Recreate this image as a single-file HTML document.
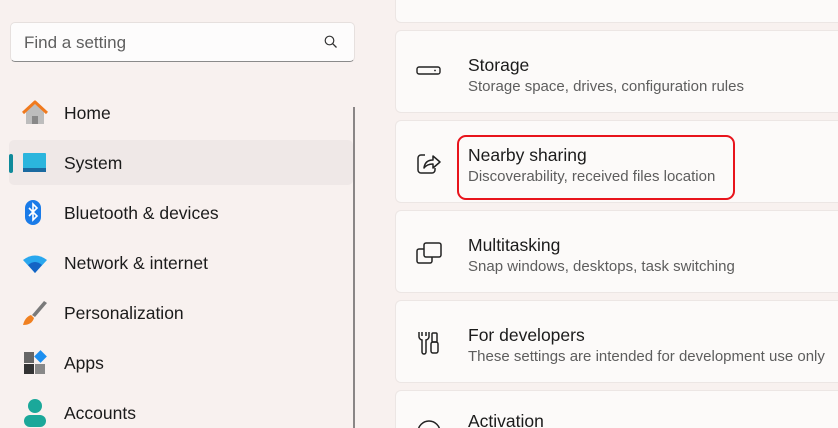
<!DOCTYPE html>
<html><head><meta charset="utf-8"><style>
*{margin:0;padding:0;box-sizing:border-box}
html,body{width:838px;height:428px;overflow:hidden}
body{background:#f8f1ef;font-family:"Liberation Sans",sans-serif;position:relative;color:#1b1b1b}
.search{position:absolute;left:10px;top:22px;width:345px;height:40px;background:#fdfcfc;border:1px solid #e6e0de;border-bottom:1px solid #8a8a8a;border-radius:5px}
.search span{position:absolute;left:13px;top:10px;font-size:17px;color:#5f5f5f}
.nav{position:absolute;left:64px;font-size:17.5px;color:#1b1b1b;line-height:20px}
.ic{position:absolute;left:22px}
.sel{position:absolute;left:9px;top:140px;width:344px;height:45px;background:#efe8e7;border-radius:5px}
.bar{position:absolute;left:9px;top:154px;width:4px;height:19px;background:#0f8a9a;border-radius:2px}
.scroll{position:absolute;left:353px;top:107px;width:2px;height:321px;background:#8a8686}
.card{position:absolute;left:395px;width:443px;height:83px;background:#fcfaf9;border:1px solid #ece6e4;border-right:none;border-radius:6px 0 0 6px;overflow:hidden}
.t{position:absolute;left:72px;top:24px;font-size:17.5px;color:#1b1b1b}
.s{position:absolute;left:72px;top:47px;font-size:15px;color:#5d5d5d;white-space:nowrap}
.ci{position:absolute;left:20px;top:30px}
</style></head><body>
<div class="search"><span>Find a setting</span>
<svg style="position:absolute;left:313px;top:12px" width="14" height="14" viewBox="0 0 14 14"><circle cx="5.5" cy="5.5" r="4.3" fill="none" stroke="#333" stroke-width="1.2"/><line x1="8.7" y1="8.7" x2="12.5" y2="12.5" stroke="#333" stroke-width="1.3"/></svg></div>
<div class="scroll"></div>
<div class="sel"></div><div class="bar"></div>
<svg class="ic" style="top:100px" width="26" height="25" viewBox="0 0 26 25"><path d="M4 12 L13 4 L22 12 V24 H4Z" fill="#bdbdbd"/><rect x="10" y="16" width="6" height="8" fill="#888"/><path d="M1 13 L13 2 L25 13" fill="none" stroke="#f07a1e" stroke-width="3" stroke-linejoin="round"/></svg>
<div class="nav" style="top:103px">Home</div>
<svg class="ic" style="top:152px" width="25" height="21"><rect x="1" y="1" width="23" height="19" rx="1" fill="#2bb5dd"/><rect x="1" y="16" width="23" height="4" fill="#1a6aa0"/></svg>
<div class="nav" style="top:153px">System</div>
<svg class="ic" style="top:199px" width="22" height="27" viewBox="0 0 22 27"><rect x="3" y="1" width="16" height="25" rx="8" fill="#1a7be8"/><path d="M7 9 L15 17 L11 21 V5 L15 9 L7 17" fill="none" stroke="#fff" stroke-width="1.6"/></svg>
<div class="nav" style="top:203px">Bluetooth &amp; devices</div>
<svg class="ic" style="top:254px" width="26" height="20" viewBox="0 0 26 20"><path d="M1 6 Q13 -3 25 6 L13 19Z" fill="#29a7ee"/><path d="M6 11 Q13 5 20 11 L13 19Z" fill="#1463c4"/></svg>
<div class="nav" style="top:253px">Network &amp; internet</div>
<svg class="ic" style="top:300px" width="26" height="26" viewBox="0 0 26 26"><path d="M22 1 L25 3 L13 17 L10 15Z" fill="#7a7a7a"/><path d="M9 15 Q3 17 1 25 Q10 25 12 18Z" fill="#f08020"/></svg>
<div class="nav" style="top:303px">Personalization</div>
<svg class="ic" style="top:350px" width="26" height="26" viewBox="0 0 26 26"><rect x="2" y="2" width="10" height="11" fill="#666"/><rect x="2" y="14" width="10" height="10" fill="#333"/><rect x="13" y="14" width="10" height="10" fill="#888"/><rect x="14" y="2" width="9" height="9" fill="#1c8ff0" transform="rotate(45 18.5 6.5)"/></svg>
<div class="nav" style="top:353px">Apps</div>
<svg class="ic" style="top:399px" width="26" height="29"><circle cx="13" cy="7" r="7" fill="#1ba89a"/><rect x="2" y="16" width="22" height="12" rx="6" fill="#1ba89a"/></svg>
<div class="nav" style="top:403px">Accounts</div>

<div class="card" style="top:0;height:23px;border-top:none;border-radius:0 0 0 6px"></div>
<div class="card" style="top:30px"><svg class="ci" style="top:34px" width="26" height="12"><rect x="1" y="2" width="23" height="7" rx="2" fill="none" stroke="#222" stroke-width="1.4"/><circle cx="19" cy="5.5" r="0.9" fill="#222"/></svg><div class="t">Storage</div><div class="s">Storage space, drives, configuration rules</div></div>
<div class="card" style="top:120px"><svg class="ci" style="top:30px" width="26" height="24" viewBox="0 0 26 24"><path d="M9 4 H5 a3 3 0 0 0 -3 3 V19 a3 3 0 0 0 3 3 H16 a3 3 0 0 0 3 -3 V17" fill="none" stroke="#222" stroke-width="1.5"/><path d="M8 17 Q9 9 17 9 V5 L24 11 L17 17 V13 Q11 13 8 17Z" fill="none" stroke="#222" stroke-width="1.5" stroke-linejoin="round"/></svg><div class="t">Nearby sharing</div><div class="s">Discoverability, received files location</div></div>
<div style="position:absolute;left:457px;top:135px;width:278px;height:65px;border:2px solid #e8141c;border-radius:9px"></div>
<div class="card" style="top:210px"><svg class="ci" style="top:30px" width="26" height="24"><rect x="8" y="2" width="17" height="14" rx="2" fill="none" stroke="#222" stroke-width="1.5"/><path d="M8 8 H3 a2 2 0 0 0 -2 2 V20 a2 2 0 0 0 2 2 H14 a2 2 0 0 0 2 -2 V16" fill="none" stroke="#222" stroke-width="1.5"/></svg><div class="t">Multitasking</div><div class="s">Snap windows, desktops, task switching</div></div>
<div class="card" style="top:300px"><svg class="ci" style="top:29px" width="26" height="26" viewBox="0 0 26 26"><path d="M3 2 V7 a4 4 0 0 0 3 3 V22 a2 2 0 0 0 4 0 V10 a4 4 0 0 0 3 -3 V2 M6 2 V6 M10 2 V6" fill="none" stroke="#222" stroke-width="1.5"/><rect x="16" y="3" width="5" height="9" rx="1" fill="none" stroke="#222" stroke-width="1.5"/><rect x="15" y="12" width="7" height="11" rx="2" fill="none" stroke="#222" stroke-width="1.5"/></svg><div class="t">For developers</div><div class="s">These settings are intended for development use only</div></div>
<div class="card" style="top:390px;height:38px;border-bottom:none;border-radius:6px 0 0 0"><svg class="ci" style="top:28px" width="26" height="10"><circle cx="13" cy="13" r="11" fill="none" stroke="#222" stroke-width="1.5"/></svg><div class="t" style="top:23px;line-height:15px;height:15px;overflow:hidden">Activation</div></div>
</body></html>
